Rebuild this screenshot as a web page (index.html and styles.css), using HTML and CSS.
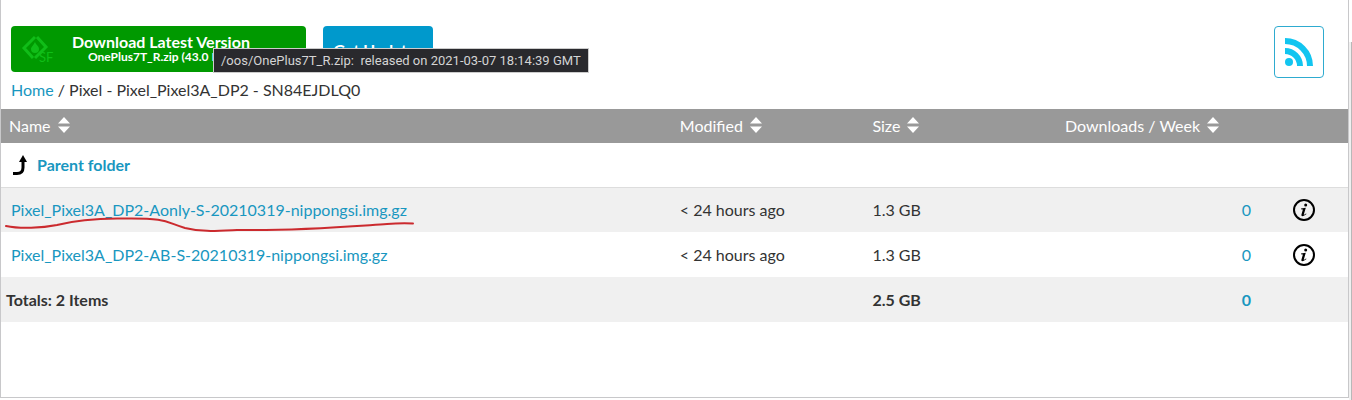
FILE: index.html
```html
<!DOCTYPE html>
<html lang="en">
<head>
    <meta charset="UTF-8">
    <meta name="viewport" content="width=device-width, initial-scale=1.0">
    <title>Pixel_Pixel3A_DP2 - SN84EJDLQ0</title>
    <link rel="stylesheet" href="styles.css">
</head>
<body>
    <main class="files">
        <div class="toolbar">
            <a class="btn download" href="#">
                <svg class="sf-logo" width="34" height="30" viewBox="0 0 34 30" aria-hidden="true">
                    <path d="M14 3 3 14l9 10M16 3l9 10-11 11" fill="none" stroke="#10bd18" stroke-width="3"/>
                    <path d="M14 8c1 3 4 4 4 7a4 4 0 0 1-8 0c0-2 2-3 4-7z" fill="#10bd18"/>
                    <text x="18" y="28" class="sf-text">SF</text>
                </svg>
                <span class="download-text">
                    <span class="download-title">Download Latest Version</span>
                    <span class="download-file">OnePlus7T_R.zip (43.0 MB)</span>
                </span>
            </a>
            <button class="btn updates" type="button">Get Updates</button>
            <a class="rss" href="#" aria-label="RSS feed">
                <svg width="28" height="28" viewBox="0 0 28 28" aria-hidden="true">
                    <circle cx="4" cy="24" r="4" fill="#12c5f0"/>
                    <path d="M0 13a15 15 0 0 1 15 15M0 3a25 25 0 0 1 25 25" fill="none" stroke="#12c5f0" stroke-width="6"/>
                </svg>
            </a>
            <div class="tooltip" role="tooltip">/oos/OnePlus7T_R.zip:&nbsp; released on 2021-03-07 18:14:39 GMT</div>
        </div>

        <nav class="breadcrumb"><a href="#">Home</a> / Pixel - Pixel_Pixel3A_DP2 - SN84EJDLQ0</nav>

        <table class="list">
            <colgroup>
                <col class="col-name">
                <col class="col-modified">
                <col class="col-size">
                <col class="col-downloads">
                <col>
            </colgroup>
            <thead>
                <tr>
                    <th>Name <svg class="sort" width="12" height="16" viewBox="0 0 12 16"><path d="M0 6.500 6 0l6 6.500zM0 9.500h12L6 16z" fill="#fff"/></svg></th>
                    <th>Modified <svg class="sort" width="12" height="16" viewBox="0 0 12 16"><path d="M0 6.500 6 0l6 6.500zM0 9.500h12L6 16z" fill="#fff"/></svg></th>
                    <th>Size <svg class="sort" width="12" height="16" viewBox="0 0 12 16"><path d="M0 6.500 6 0l6 6.500zM0 9.500h12L6 16z" fill="#fff"/></svg></th>
                    <th>Downloads / Week <svg class="sort" width="12" height="16" viewBox="0 0 12 16"><path d="M0 6.500 6 0l6 6.500zM0 9.500h12L6 16z" fill="#fff"/></svg></th>
                    <th></th>
                </tr>
            </thead>
            <tbody>
                <tr class="parent">
                    <td colspan="5">
                        <a href="#">
                            <svg width="16" height="22" viewBox="0 0 16 22" aria-hidden="true">
                                <path d="M0 19.500h4q6 0 6-6V6" fill="none" stroke="#000" stroke-width="3"/>
                                <path d="M6 8 10 1l4 7z"/>
                            </svg>
                            Parent folder
                        </a>
                    </td>
                </tr>
                <tr class="odd">
                    <td class="name">
                        <a href="#">Pixel_Pixel3A_DP2-Aonly-S-20210319-nippongsi.img.gz</a>
                        <svg class="marker" width="412" height="18" viewBox="0 0 412 18" aria-hidden="true">
                            <path d="M1 9C15 12 37 11 52 8C75 2 95 1 120 1.500C163 1 160 5 180 11C196 15 210 14 232 13C290 14 350 9 382 7Q395 6 408 6.500" fill="none" stroke="#cb2a2e" stroke-width="2" stroke-linecap="round"/>
                        </svg>
                    </td>
                    <td>&lt; 24 hours ago</td>
                    <td>1.3 GB</td>
                    <td class="count"><a href="#">0</a></td>
                    <td class="info">
                        <button type="button" aria-label="File details">
                            <svg width="22" height="22" viewBox="0 0 22 22"><circle cx="11" cy="11" r="10" fill="none" stroke="#000" stroke-width="2"/><circle cx="12.700" cy="5.900" r="1.500"/><path d="M8 9.500 12.800 8.700 10.800 15.500Q10.600 16.400 13 14.500L13.500 15Q8 19 8.400 15.800L9.900 10.500 8 10.300z"/></svg>
                        </button>
                    </td>
                </tr>
                <tr>
                    <td class="name"><a href="#">Pixel_Pixel3A_DP2-AB-S-20210319-nippongsi.img.gz</a></td>
                    <td>&lt; 24 hours ago</td>
                    <td>1.3 GB</td>
                    <td class="count"><a href="#">0</a></td>
                    <td class="info">
                        <button type="button" aria-label="File details">
                            <svg width="22" height="22" viewBox="0 0 22 22"><circle cx="11" cy="11" r="10" fill="none" stroke="#000" stroke-width="2"/><circle cx="12.700" cy="5.900" r="1.500"/><path d="M8 9.500 12.800 8.700 10.800 15.500Q10.600 16.400 13 14.500L13.500 15Q8 19 8.400 15.800L9.900 10.500 8 10.300z"/></svg>
                        </button>
                    </td>
                </tr>
            </tbody>
            <tfoot>
                <tr>
                    <td class="totals">Totals: 2 Items</td>
                    <td></td>
                    <td>2.5 GB</td>
                    <td class="count"><a href="#">0</a></td>
                    <td></td>
                </tr>
            </tfoot>
        </table>
    </main>
    <div class="edge"></div>
</body>
</html>
```

FILE: styles.css
```css
* {
    box-sizing: border-box;
}
body {
    display: flex;
    margin: 0;
    min-height: 100vh;
    background: #fff;
    color: #333;
    font-family: Lato, "Liberation Sans", sans-serif;
    font-size: 16px;
    line-height: 20px;
}
a {
    color: #1997c0;
    text-decoration: none;
}
.files {
    flex: 1;
    align-self: flex-start;
    padding: 26px 0 75px;
    border: solid #c8c8ca;
    border-width: 0 1px 1px;
}
.edge {
    width: 3px;
    margin-top: 42px;
    background: #f0f0f0;
    border-right: 1px solid #b8b8b8;
}

/* buttons above the list */
.toolbar {
    position: relative;
    display: flex;
    align-items: flex-start;
    padding: 0 24px 0 10px;
}
.btn {
    display: flex;
    align-items: center;
    height: 46px;
    border: 0;
    border-radius: 4px;
    color: #fff;
    font-family: inherit;
    font-size: 16px;
    font-weight: bold;
}
.download {
    width: 295px;
    padding-left: 10px;
    background: #090;
}
.sf-text {
    fill: #10bd18;
    font-size: 13px;
    font-weight: normal;
}
.download-text {
    display: flex;
    flex-direction: column;
    align-items: center;
    margin-left: 17px;
}
.download-title {
    line-height: 16px;
}
.download-file {
    font-size: 12px;
    line-height: 14px;
}
.updates {
    justify-content: center;
    width: 110px;
    margin-left: 17px;
    padding: 0;
    background: #09c;
}
.rss {
    display: flex;
    align-items: center;
    justify-content: center;
    width: 50px;
    height: 52px;
    margin-left: auto;
    border: 1px solid #2eabd0;
    border-radius: 4px;
}
.tooltip {
    position: absolute;
    top: 22px;
    left: 212px;
    padding: 0 7px;
    border: 1px solid #ccc;
    background: #29292d;
    color: #d4d4d4;
    font-family: Roboto, "Open Sans", sans-serif;
    font-size: 13px;
    line-height: 23px;
    white-space: nowrap;
}
.breadcrumb {
    padding: 2px 10px 9px;
}

/* file list */
.list {
    width: 100%;
    border-spacing: 0;
    table-layout: fixed;
}
.col-name {
    width: 49.8%;
}
.col-modified, .col-size {
    width: 14.3%;
}
.col-downloads {
    width: 15%;
}
.list th {
    height: 34px;
    padding: 0 8px;
    background: #999;
    color: #fff;
    font-weight: normal;
    text-align: left;
}
.sort {
    margin-left: 3px;
    vertical-align: -1px;
}
.list td {
    height: 45px;
    padding: 0 8px;
}
.list .parent td {
    height: 44px;
}
.parent a {
    display: flex;
    align-items: center;
    gap: 8px;
    padding-left: 4px;
    font-weight: bold;
}
.odd, tfoot {
    background: #f0f0f0;
}
.odd td {
    border-top: 1px solid #ddd;
}
.list .name {
    position: relative;
    padding-left: 10px;
}
.marker {
    position: absolute;
    top: 29px;
    left: 4px;
}
.list .count {
    text-align: right;
}
.info button {
    display: block;
    margin: 0 auto;
    padding: 0;
    border: 0;
    background: none;
}
.info svg {
    display: block;
}
tfoot {
    font-weight: bold;
}
.list .totals {
    padding-left: 5px;
}
```
